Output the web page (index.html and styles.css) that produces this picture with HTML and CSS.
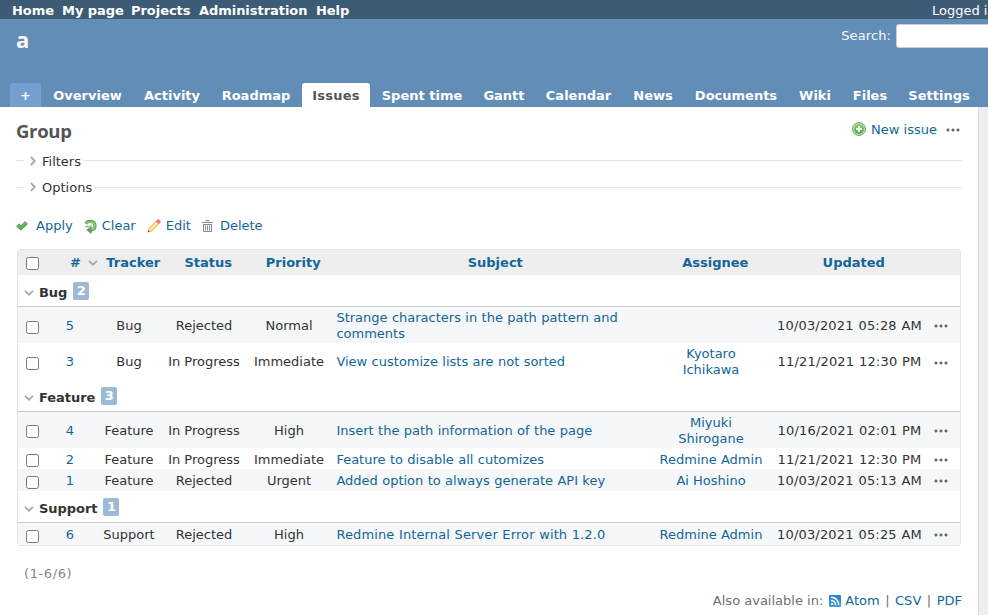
FILE: index.html
```html
<!DOCTYPE html>
<html lang="en">
<head>
<meta charset="utf-8">
<title>Group - a - Redmine</title>
<link rel="stylesheet" href="styles.css">
</head>
<body>
<svg width="0" height="0" class="defs">
  <defs>
    <linearGradient id="green" x1="0" y1="0" x2="0" y2="1"><stop offset="0" stop-color="#8fce7f"/><stop offset="1" stop-color="#4da53d"/></linearGradient>
    <linearGradient id="blue" x1="0" y1="0" x2="0" y2="1"><stop offset="0" stop-color="#2484c8"/><stop offset="1" stop-color="#4a9cd4"/></linearGradient>
    <symbol id="dots" viewBox="0 0 14 4"><g fill="#888" stroke="#4a4a4a" stroke-width=".9"><circle cx="2" cy="2" r="1.1"/><circle cx="7" cy="2" r="1.1"/><circle cx="12" cy="2" r="1.1"/></g></symbol>
    <symbol id="down" viewBox="0 0 10 6"><path d="M1 .9 5 4.7 9 .9" fill="none" stroke="#aaa" stroke-width="1.9"/></symbol>
    <symbol id="right" viewBox="0 0 6 10"><path d="M.9 1 4.7 5 .9 9" fill="none" stroke="#aaa" stroke-width="1.9"/></symbol>
  </defs>
</svg>
<div class="top-menu">
  <nav class="top-links"><a>Home</a><a>My page</a><a>Projects</a><a>Administration</a><a>Help</a></nav>
  <div class="logged">Logged in as</div>
</div>
<header class="header">
  <div class="header-row">
    <h1>a</h1>
    <div class="search"><label>Search:</label><input type="text"></div>
  </div>
  <nav class="tabs"><a class="plus">+</a><a>Overview</a><a>Activity</a><a>Roadmap</a><a class="selected">Issues</a><a>Spent time</a><a>Gantt</a><a>Calendar</a><a>News</a><a>Documents</a><a>Wiki</a><a>Files</a><a>Settings</a></nav>
</header>
<div class="main">
  <main class="content">
    <div class="title-row">
      <h2>Group</h2>
      <div class="contextual">
        <svg class="add" viewBox="0 0 14 14"><circle cx="7" cy="7" r="6.4" fill="#c9e8bf" stroke="#5d9e50"/><circle cx="7" cy="7" r="5" fill="url(#green)"/><path d="M7 4v6M4 7h6" stroke="#fff" stroke-width="2"/></svg>
        <a>New issue</a>
        <svg class="dots"><use href="#dots"/></svg>
      </div>
    </div>
    <div class="fieldset first"><i class="stub"></i><svg class="right"><use href="#right"/></svg><span>Filters</span><i class="rule"></i></div>
    <div class="fieldset"><i class="stub"></i><svg class="right"><use href="#right"/></svg><span>Options</span><i class="rule"></i></div>
    <div class="buttons">
      <a><svg class="i-apply" viewBox="0 0 12 10"><path d="M.6 5.2 3 2.9 5 4.7 9.1.7 11.5 2.9 5 9.2Z" fill="#62b456" stroke="#3f8f3a" stroke-width=".8"/></svg>Apply</a>
      <a><svg class="i-clear" viewBox="0 0 13 15"><path d="M2 4.8C3.5 1.3 11 1.6 11 6.6c0 2.8-2 4.2-4.2 4.3" fill="none" stroke="#5a9c50" stroke-width="3.2"/><path d="M7.2 8v6.3L2.9 11Z" fill="#52a647" stroke="#3f8539" stroke-width=".7"/><path d="M2 4.9C3.6 2.1 10.8 2.2 10.9 6.6c0 2.6-2 3.8-4.3 4M1.2 7.6h4.5c1.2 0 1.6-.5 1.2-1.5" fill="none" stroke="#8dca7e" stroke-width="1.7"/></svg>Clear</a>
      <a><svg class="i-edit" viewBox="0 0 14 14"><path d="M1 13 2.1 9.2 9.3 2 12 4.7 4.8 11.9Z" fill="#fbe08a" stroke="#d9a441" stroke-width=".8"/><path d="M3.2 10.6 10.5 3.4" stroke="#fff4c0"/><path d="M9.2 2.2 10.6.8Q11.3.2 12 .8L13.2 2Q13.7 2.7 13.2 3.3L11.8 4.7Z" fill="#f47d78" stroke="#d96b67" stroke-width=".5"/><path d="m.7 13.3.5-2 1.5 1.5Z" fill="#555"/></svg>Edit</a>
      <a><svg class="i-delete" viewBox="0 0 11 12"><path d="M4 1.5V.5h3v1M0 2.5h11M1 4.5h9M1.5 4.5v7h8v-7M3.5 5.5v5M5.5 5.5v5M7.5 5.5v5" fill="none" stroke="#8a8997" stroke-width="1"/></svg>Delete</a>
    </div>
    <div class="issues">
      <div class="row head"><i class="box"></i><span class="sorted"><a>#</a><svg class="down"><use href="#down"/></svg></span><a>Tracker</a><a>Status</a><a>Priority</a><a>Subject</a><a>Assignee</a><a>Updated</a><span></span></div>
      <div class="group"><svg class="down"><use href="#down"/></svg><b>Bug</b><span class="count">2</span></div>
      <div class="row odd tall"><i class="box"></i><a>5</a><span>Bug</span><span>Rejected</span><span>Normal</span><a class="subject">Strange characters in the path pattern and comments</a><a></a><span class="date">10/03/2021 05:28 AM</span><svg class="dots"><use href="#dots"/></svg></div>
      <div class="row taller"><i class="box"></i><a>3</a><span>Bug</span><span>In Progress</span><span>Immediate</span><a class="subject">View customize lists are not sorted</a><a>Kyotaro<br>Ichikawa</a><span class="date">11/21/2021 12:30 PM</span><svg class="dots"><use href="#dots"/></svg></div>
      <div class="group"><svg class="down"><use href="#down"/></svg><b>Feature</b><span class="count">3</span></div>
      <div class="row odd tall upper"><i class="box"></i><a>4</a><span>Feature</span><span>In Progress</span><span>High</span><a class="subject">Insert the path information of the page</a><a>Miyuki<br>Shirogane</a><span class="date">10/16/2021 02:01 PM</span><svg class="dots"><use href="#dots"/></svg></div>
      <div class="row short"><i class="box"></i><a>2</a><span>Feature</span><span>In Progress</span><span>Immediate</span><a class="subject">Feature to disable all cutomizes</a><a>Redmine Admin</a><span class="date">11/21/2021 12:30 PM</span><svg class="dots"><use href="#dots"/></svg></div>
      <div class="row odd"><i class="box"></i><a>1</a><span>Feature</span><span>Rejected</span><span>Urgent</span><a class="subject">Added option to always generate API key</a><a>Ai Hoshino</a><span class="date">10/03/2021 05:13 AM</span><svg class="dots"><use href="#dots"/></svg></div>
      <div class="group"><svg class="down"><use href="#down"/></svg><b>Support</b><span class="count">1</span></div>
      <div class="row odd"><i class="box"></i><a>6</a><span>Support</span><span>Rejected</span><span>High</span><a class="subject version">Redmine Internal Server Error with 1.2.0</a><a>Redmine Admin</a><span class="date">10/03/2021 05:25 AM</span><svg class="dots"><use href="#dots"/></svg></div>
    </div>
    <div class="pagination">(1-6/6)</div>
    <div class="formats"><span>Also available in:</span><svg class="rss" viewBox="0 0 12 12"><rect width="12" height="12" rx="1" fill="url(#blue)"/><path d="M2 2.3c4.5 0 7.7 3.2 7.7 7.7M2 5.5c2.7 0 4.5 1.8 4.5 4.5" fill="none" stroke="#fff" stroke-width="1.4"/><circle cx="3" cy="9" r="1.1" fill="#fff"/></svg><a>Atom</a><i>|</i><a>CSV</a><i>|</i><a>PDF</a></div>
  </main>
</div>
</body>
</html>
```
FILE: styles.css
```css
* { box-sizing: border-box; }
body {
  margin: 0;
  height: 615px;
  overflow: hidden;
  display: flex;
  flex-direction: column;
  font: 13px/16px "DejaVu Sans", Verdana, sans-serif;
  color: #333;
  background: #fff;
}
svg { flex: none; display: block; }
.defs { position: absolute; }
i { font-style: normal; }
a { color: #169; text-decoration: none; }

.top-menu {
  height: 19px;
  flex: none;
  display: flex;
  justify-content: space-between;
  background: #3e5b76;
  padding: 3px 0 0 12px;
  color: #fff;
  white-space: nowrap;
}
.top-links {
  display: grid;
  grid-template-columns: 50px 69px 68px 117px 40px;
  font-weight: bold;
  letter-spacing: -.05px;
}
.top-links a { color: #fff; }
.logged { width: 56px; overflow: hidden; }

.header {
  height: 88px;
  flex: none;
  overflow: hidden;
  background: #628db6;
  color: #f8f8f8;
  display: flex;
  flex-direction: column;
  justify-content: space-between;
}
.header-row { display: flex; justify-content: space-between; }
h1 {
  margin: 6px 0 0 16px;
  font: 700 22px/28px "Open Sans", sans-serif;
}
.search { display: flex; gap: 5px; padding-top: 5px; line-height: 24px; letter-spacing: .1px; }
.search input {
  width: 92px;
  height: 24px;
  border: 1px solid #ccc;
  border-right: 0;
  border-radius: 3px 0 0 3px;
  background: #fff;
}
.tabs {
  display: grid;
  grid-template-columns: 31px 89px 76px 88px 68px 100px 60px 85px 60px 102px 52px 54px 80px;
  column-gap: 2px;
  padding-left: 10px;
  height: 24px;
  line-height: 25px;
  font-weight: bold;
  text-align: center;
  white-space: nowrap;
}
.tabs a { color: #fff; border-radius: 3px 3px 0 0; }
.tabs .plus { background: #759fcf; }
.tabs .selected { background: #fff; color: #555; letter-spacing: .2px; }

.main { flex: 1; display: flex; background: #eee; }
.content {
  width: 979px;
  background: #fff;
  border-right: 1px solid #ddd;
  padding: 0 16px;
}
.title-row { display: flex; justify-content: space-between; height: 41px; }
h2 {
  margin: 10px 0 0;
  font: 700 18.5px/28px "Open Sans", sans-serif;
  letter-spacing: -.3px;
  color: #555;
}
.contextual { display: flex; align-items: center; height: 16px; margin-top: 14px; }
.contextual a { padding-top: 1px; }
.add { width: 14px; height: 14px; margin-right: 5px; }
.dots { width: 14px; height: 4px; }
.contextual .dots { margin: 2px 2px 0 9px; }

.fieldset { display: flex; align-items: center; height: 26px; color: #333; }
.fieldset.first { height: 25px; margin-bottom: 1px; }
.fieldset.first span { padding-top: 2px; }
.fieldset span { margin-left: 6px; padding-top: 1px; }
.stub { width: 8px; height: 1px; background: #e4e4e4; }
.rule { flex: 1; height: 1px; margin-left: 2px; background: #e4e4e4; }
.right { width: 6px; height: 10px; margin-left: 6px; }

.buttons { display: flex; height: 16px; margin-top: 18px; }
.buttons a { display: flex; align-items: center; }
.i-apply { width: 12px; height: 10px; margin-right: 8px; }
.i-clear { width: 13px; height: 15px; margin: 1px 5px 0 11px; }
.i-edit { width: 14px; height: 14px; margin: 0 5px 0 11px; }
.i-delete { width: 11px; height: 12px; margin: 0 7px 0 11px; }

.issues {
  width: 944px;
  margin: 15px 0 0 1px;
  border: 1px solid #e4e4e4;
  border-radius: 3px;
}
.row {
  display: grid;
  grid-template-columns: 26px 52px 66px 84px 86px 318px 122px 155px 29px;
  align-items: center;
  justify-items: center;
  height: 22px;
  text-align: center;
}
.row > a, .row > span { padding-top: 1px; }
.row.head { height: 25px; background: #eee; font-weight: bold; }
.row.head > a, .row.head > span { padding-top: 0; }
.head > a { margin-left: 8.5px; }
.row.tall { height: 36px; }
.row.taller { height: 37px; }
.row.short { height: 21px; }
.row.short > a, .row.short > span { padding-top: 2px; }
.row.taller > a, .row.taller > span { padding-top: 0; }
.odd { background: #f6f7f8; }
.box {
  justify-self: start;
  width: 13px;
  height: 13px;
  margin: 5px 0 0 8px;
  border: 1px solid #767676;
  border-radius: 2.5px;
  background: #fff;
}
.head .box { margin-top: 2px; }
.short .box, .taller .box { margin-top: 4px; }
.upper .box { margin-top: 3px; }
.row .subject {
  justify-self: start;
  margin: 0;
  padding-left: 4.4px;
  padding-right: 4px;
  text-align: left;
  word-spacing: .25px;
}
.row .version { letter-spacing: .12px; }
.date { letter-spacing: .18px; word-spacing: .4px; white-space: nowrap; }
.head .sorted { display: flex; align-items: center; gap: 7px; margin-left: 28px; }
.row .dots { margin: 2px 1px 0 0; }
.down { width: 10px; height: 6px; }
.group {
  display: flex;
  align-items: center;
  height: 32px;
  padding: 4px 0 0 6px;
  border-bottom: 1px solid #c8cacc;
}
.group b { margin: 0 6px 0 5px; letter-spacing: -.05px; }
.count {
  width: 16px;
  height: 18px;
  margin-top: -3px;
  border-radius: 2px;
  background: #9db9d5;
  color: #fff;
  font-weight: bold;
  line-height: 18px;
  text-align: center;
}
.pagination { margin: 20px 0 0 8px; color: #888; letter-spacing: .6px; }
.formats { display: flex; justify-content: flex-end; margin-top: 11px; color: #707070; }
.rss { width: 12px; height: 12px; margin: 2px 4px 0 6px; }
.formats i { margin: 0 5.5px; }
```
